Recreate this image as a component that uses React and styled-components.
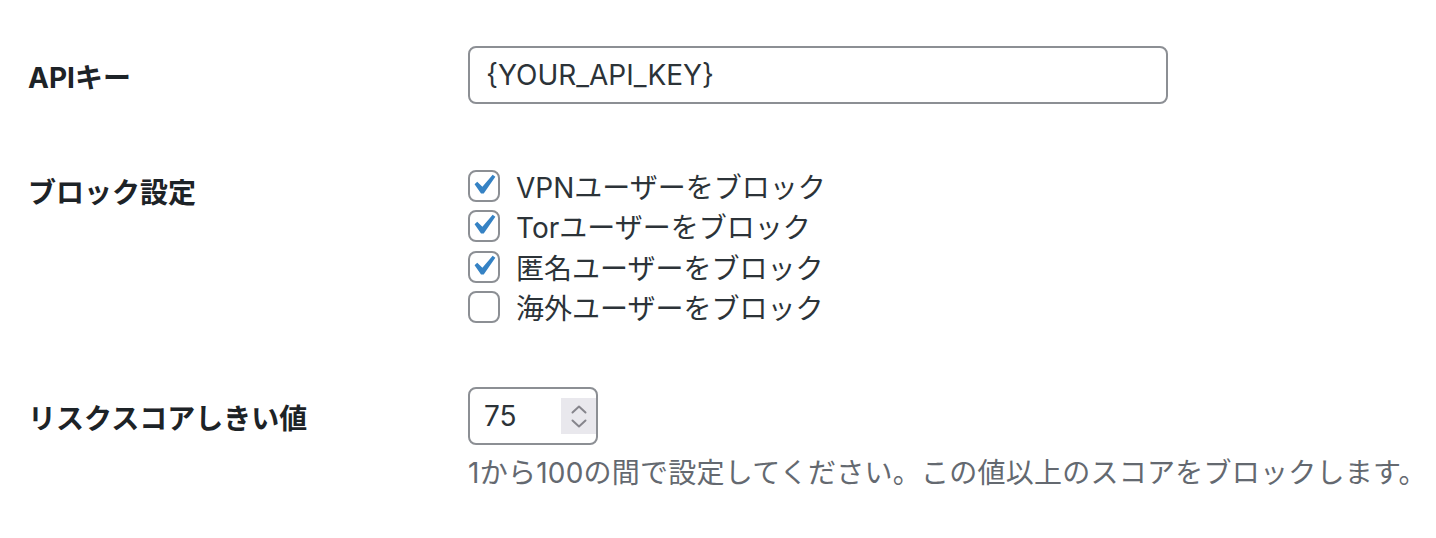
import React, { useState } from "react";
import styled, { createGlobalStyle } from "styled-components";

const GlobalStyle = createGlobalStyle`
  html, body {
    margin: 0;
    padding: 0;
    background: #fff;
  }
  body {
    font-family: Inter, "Noto Sans CJK JP", sans-serif;
    color: #3c434a;
    -webkit-font-smoothing: antialiased;
  }
`;

const Page = styled.div`
  padding: 16px 28px 0;
`;

const FormTable = styled.div`
  display: flex;
  flex-direction: column;
`;

const Row = styled.div`
  display: flex;
  align-items: flex-start;
`;

const Label = styled.div`
  width: 440px;
  flex-shrink: 0;
  padding-top: ${(p) => p.$top}px;
  font-size: 28px;
  line-height: 36px;
  font-weight: 700;
  color: #1d2327;
`;

const Field = styled.div`
  padding: ${(p) => p.$top}px 0 30px;
  display: flex;
  flex-direction: column;
`;

const TextInput = styled.input`
  box-sizing: border-box;
  width: 700px;
  height: 58px;
  padding: 0 16px;
  border: 2px solid #8c8f94;
  border-radius: 8px;
  font-family: Inter, "Noto Sans CJK JP", sans-serif;
  font-size: 28px;
  color: #2c3338;
  background: #fff;
  outline: none;
`;

const CheckList = styled.fieldset`
  border: 0;
  margin: 0;
  padding: 0;
  display: flex;
  flex-direction: column;
`;

const CheckLabel = styled.label`
  display: flex;
  align-items: center;
  height: 40.3px;
  font-size: 28px;
  color: #2c3338;
  cursor: pointer;
`;

const Box = styled.span`
  box-sizing: border-box;
  width: 32px;
  height: 32px;
  margin-right: 16px;
  border: 2px solid #8c8f94;
  border-radius: 8px;
  background: #fff;
  display: flex;
  align-items: center;
  justify-content: center;
  overflow: visible;
  svg {
    width: 40px;
    height: 40px;
    flex-shrink: 0;
    margin: -2px 0 0 -2px;
  }
`;

const NumberWrap = styled.div`
  box-sizing: border-box;
  width: 130px;
  height: 58px;
  border: 2px solid #8c8f94;
  border-radius: 8px;
  display: flex;
  align-items: center;
  background: #fff;
`;

const NumberInput = styled.input`
  flex: 1;
  min-width: 0;
  border: 0;
  outline: none;
  padding: 0 0 0 14px;
  height: 100%;
  background: transparent;
  font-family: Inter, "Noto Sans CJK JP", sans-serif;
  font-size: 28px;
  color: #2c3338;
  -moz-appearance: textfield;
  &::-webkit-inner-spin-button,
  &::-webkit-outer-spin-button {
    -webkit-appearance: none;
    margin: 0;
  }
`;

const Spinner = styled.span`
  width: 35px;
  height: 36px;
  background: #e9e8ed;
  display: flex;
  flex-direction: column;
  align-items: center;
  justify-content: center;
  gap: 5px;
  svg {
    display: block;
  }
`;

const Description = styled.p`
  margin: 8px 0 0;
  font-size: 28px;
  letter-spacing: 0.25px;
  line-height: 40px;
  color: #646970;
  white-space: nowrap;
`;

const Check = () => (
  <svg viewBox="0 0 20 20" aria-hidden="true">
    <path
      fill="#3582c4"
      d="M14.83 4.89l1.34.94-5.81 8.38H9.02L5.78 9.67l1.34-1.25 2.57 2.4z"
    />
  </svg>
);

const Chevron = ({ up }) => (
  <svg width="16" height="9" viewBox="0 0 16 9" aria-hidden="true">
    <path
      d={up ? "M1.5 7.5L8 1.5l6.5 6" : "M1.5 1.5L8 7.5l6.5-6"}
      fill="none"
      stroke="#86858c"
      strokeWidth="2"
      strokeLinecap="round"
      strokeLinejoin="round"
    />
  </svg>
);

const options = [
  { key: "vpn", text: "VPNユーザーをブロック", on: true },
  { key: "tor", text: "Torユーザーをブロック", on: true },
  { key: "anon", text: "匿名ユーザーをブロック", on: true },
  { key: "abroad", text: "海外ユーザーをブロック", on: false },
];

const App = () => {
  const [checks, setChecks] = useState(
    Object.fromEntries(options.map((o) => [o.key, o.on]))
  );
  const [apiKey, setApiKey] = useState("{YOUR_API_KEY}");
  const [score, setScore] = useState(75);

  return (
    <Page>
      <GlobalStyle />
      <FormTable>
        <Row>
          <Label $top={44}>APIキー</Label>
          <Field $top={30}>
            <TextInput value={apiKey} onChange={(e) => setApiKey(e.target.value)} />
          </Field>
        </Row>
        <Row>
          <Label $top={41}>ブロック設定</Label>
          <Field $top={32}>
            <CheckList>
              {options.map((o) => (
                <CheckLabel
                  key={o.key}
                  onClick={() => setChecks({ ...checks, [o.key]: !checks[o.key] })}
                >
                  <Box>{checks[o.key] && <Check />}</Box>
                  {o.text}
                </CheckLabel>
              ))}
            </CheckList>
          </Field>
        </Row>
        <Row>
          <Label $top={44}>リスクスコアしきい値</Label>
          <Field $top={30}>
            <NumberWrap>
              <NumberInput
                type="number"
                value={score}
                min={1}
                max={100}
                onChange={(e) => setScore(e.target.value)}
              />
              <Spinner>
                <Chevron up />
                <Chevron />
              </Spinner>
            </NumberWrap>
            <Description>
              1から100の間で設定してください。この値以上のスコアをブロックします。
            </Description>
          </Field>
        </Row>
      </FormTable>
    </Page>
  );
};

export default App;
